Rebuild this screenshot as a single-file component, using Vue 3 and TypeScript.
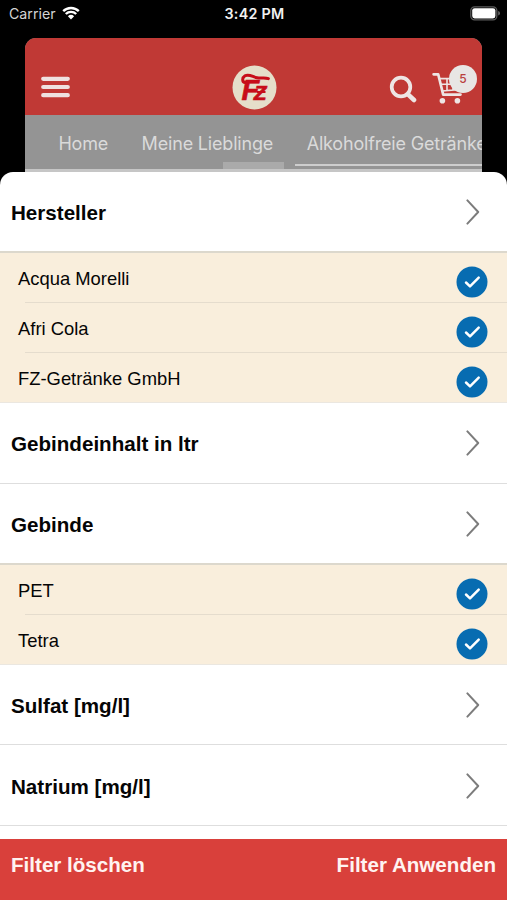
<script setup lang="ts">
import { ref } from 'vue'

interface Option {
  label: string
  checked: boolean
}
interface Section {
  title: string
  options: Option[]
}

const tabs: string[] = ['Home', 'Meine Lieblinge', 'Alkoholfreie Getränke']
const cartCount = ref(5)

const sections = ref<Section[]>([
  {
    title: 'Hersteller',
    options: [
      { label: 'Acqua Morelli', checked: true },
      { label: 'Afri Cola', checked: true },
      { label: 'FZ-Getränke GmbH', checked: true },
    ],
  },
  { title: 'Gebindeinhalt in ltr', options: [] },
  {
    title: 'Gebinde',
    options: [
      { label: 'PET', checked: true },
      { label: 'Tetra', checked: true },
    ],
  },
  { title: 'Sulfat [mg/l]', options: [] },
  { title: 'Natrium [mg/l]', options: [] },
])

function clearFilters(): void {
  for (const s of sections.value) for (const o of s.options) o.checked = false
}
</script>

<template>
  <div class="screen">
    <header class="status">
      <div class="carrier">
        <span>Carrier</span>
        <svg class="wifi" viewBox="0 0 18 14" width="18" height="14">
          <path d="M1.2 5.1 A11.2 11.2 0 0 1 16.8 5.1" />
          <path d="M3.8 8 A7.4 7.4 0 0 1 14.2 8" />
          <path class="dot" d="M9 13.4 L5.9 10.3 A4.5 4.5 0 0 1 12.1 10.3 Z" />
        </svg>
      </div>
      <div class="time">3:42 PM</div>
      <svg class="battery" viewBox="0 0 31 15" width="31" height="15">
        <rect class="shell" x="0.8" y="0.8" width="26" height="13" rx="3.8" />
        <rect class="charge" x="2.2" y="2.2" width="23.2" height="10.2" rx="2.4" />
        <path class="cap" d="M28.2 5 Q30 5.6 30 7.3 Q30 9 28.2 9.6 Z" />
      </svg>
    </header>

    <div class="backdrop">
      <div class="appbar">
        <svg class="menu" viewBox="0 0 29 22" width="29" height="22">
          <path d="M2.2 2.8 H26.8 M2.2 11 H26.8 M2.2 19.2 H26.8" />
        </svg>
        <svg class="logo" viewBox="0 0 45 45" width="45" height="45">
          <circle cx="22.5" cy="22.5" r="22" />
          <path class="swash" d="M13.4 17.4 C10.2 17.6 9.6 13 13 10.8 C17 8.6 20.5 11.8 25 12.8 C29 13.6 33 12.4 36.4 13.6" />
          <text x="9.4" y="34.6"><tspan class="big">F</tspan><tspan class="small" dx="-5.4">Z</tspan></text>
          <path class="bar" d="M25 27 H33.5" />
        </svg>
        <div class="actions">
          <svg class="search" viewBox="0 0 28 28" width="28" height="28">
            <circle cx="12" cy="12" r="9.3" />
            <path d="M19 19.4 L25 25" />
          </svg>
          <div class="cart">
            <svg viewBox="0 0 34 32" width="34" height="32">
              <path class="frame" d="M1.6 2.3 H6.2 L11.2 22.6 H28.5" />
              <path class="grid" d="M7.5 6.6 H30 L28 17.4 L10.2 19 M8.6 12.2 H29 M15 7 V18.5 M21 7 V18" />
              <circle cx="10.4" cy="28.7" r="2.8" />
              <circle cx="25.4" cy="28.7" r="2.8" />
            </svg>
            <span class="badge">{{ cartCount }}</span>
          </div>
        </div>
      </div>
      <nav class="tabs">
        <span v-for="tab in tabs" :key="tab" class="tab">{{ tab }}</span>
        <i class="indicator"></i>
        <i class="underline"></i>
      </nav>
    </div>

    <main class="sheet">
      <section v-for="section in sections" :key="section.title">
        <div class="heading" :class="{ open: section.options.length > 0 }">
          <h2>{{ section.title }}</h2>
          <svg class="chevron" viewBox="0 0 14 26" width="14" height="26">
            <path d="M1.4 1.4 L12.2 13 L1.4 24.6" />
          </svg>
        </div>
        <ul v-if="section.options.length" class="options">
          <li v-for="option in section.options" :key="option.label" @click="option.checked = !option.checked">
            <span>{{ option.label }}</span>
            <svg v-if="option.checked" class="check" viewBox="0 0 32 32" width="32" height="32">
              <circle cx="16" cy="16" r="15.5" />
              <path d="M10 16.5 L14 20.4 L22.7 11.6" />
            </svg>
          </li>
        </ul>
      </section>
    </main>

    <footer class="footer">
      <button type="button" @click="clearFilters">Filter löschen</button>
      <button type="button">Filter Anwenden</button>
    </footer>
  </div>
</template>

<style>
body {
  margin: 0;
  background: #000;
}
</style>

<style scoped>
.screen {
  width: 507px;
  height: 900px;
  display: flex;
  flex-direction: column;
  overflow: hidden;
  background: #000;
  font-family: 'Liberation Sans', Arial, sans-serif;
  color: #050505;
}
svg {
  display: block;
  flex: none;
}
.status {
  flex: none;
  box-sizing: border-box;
  height: 38px;
  padding: 0 7px 11px 9px;
  display: grid;
  grid-template-columns: 1fr auto 1fr;
  align-items: center;
  color: #f1f1f1;
  font-family: Inter, sans-serif;
}
.carrier {
  display: flex;
  align-items: center;
  gap: 6px;
  font-size: 14.2px;
  color: #d4d4d4;
}
.wifi {
  margin-top: -2px;
}
.wifi path {
  fill: none;
  stroke: #fff;
  stroke-width: 2.4;
}
.wifi .dot {
  fill: #fff;
  stroke: none;
}
.time {
  font-size: 14.3px;
  font-weight: 600;
  letter-spacing: 0.3px;
}
.battery {
  justify-self: end;
  margin-top: -1px;
  margin-right: -1px;
}
.shell {
  fill: none;
  stroke: #5c5c5c;
  stroke-width: 1.3;
}
.charge {
  fill: #fff;
}
.cap {
  fill: #666;
}
.backdrop {
  flex: none;
  height: 134px;
  margin: 0 24.6px 0 25.4px;
  border-radius: 11px 11px 0 0;
  overflow: hidden;
  background: #949494;
}
.appbar {
  box-sizing: border-box;
  height: 77px;
  padding: 20px 5.5px 0 16px;
  background: #c03935;
  display: grid;
  grid-template-columns: 1fr auto 1fr;
  align-items: center;
}
.menu path {
  fill: none;
  stroke: #efe1e0;
  stroke-width: 4.2;
  stroke-linecap: round;
}
.logo {
  margin-left: -10px;
  margin-top: 1px;
}
.logo circle {
  fill: #e5dfca;
}
.logo text {
  fill: #c70d19;
  stroke: #c70d19;
  stroke-width: 0.6;
  font-family: 'Liberation Sans', Arial, sans-serif;
  font-style: italic;
  font-weight: 700;
}
.logo .big {
  font-size: 29px;
}
.logo .small {
  font-size: 21px;
}
.logo .swash {
  fill: none;
  stroke: #c70d19;
  stroke-width: 3;
  stroke-linecap: round;
}
.logo .bar {
  stroke: #c70d19;
  stroke-width: 1.8;
}
.actions {
  justify-self: end;
  display: flex;
  align-items: center;
  gap: 14.5px;
}
.search {
  margin-top: 5px;
}
.search circle,
.search path {
  fill: none;
  stroke: #eee5e4;
  stroke-width: 3.7;
  stroke-linecap: round;
}
.search path {
  stroke-width: 4.6;
}
.cart {
  position: relative;
  width: 45px;
  margin-top: 2px;
}
.cart circle {
  fill: #eee5e4;
}
.frame {
  fill: none;
  stroke: #eee5e4;
  stroke-width: 2.7;
  stroke-linecap: round;
  stroke-linejoin: round;
}
.grid {
  fill: none;
  stroke: #eee5e4;
  stroke-width: 1.6;
}
.badge {
  position: absolute;
  top: -7px;
  right: 0;
  width: 28px;
  height: 28px;
  border-radius: 50%;
  background: #e8e6e4;
  color: #b9413d;
  font: 500 12px/28px Inter, sans-serif;
  text-align: center;
}
.tabs {
  position: relative;
  height: 57px;
  box-sizing: border-box;
  padding-left: 33px;
  display: flex;
  gap: 33.5px;
  border-bottom: 3px solid #c6c6c6;
  font-family: Inter, sans-serif;
  font-size: 18px;
  line-height: 57px;
  letter-spacing: -0.18px;
  color: #dadada;
  white-space: nowrap;
}
.indicator {
  position: absolute;
  left: 198px;
  bottom: 0;
  width: 61px;
  height: 7px;
  background: #aaa;
}
.underline {
  position: absolute;
  left: 270px;
  right: 0;
  bottom: 3px;
  height: 2px;
  background: #cdcdcd;
}
.sheet {
  flex: 1;
  min-height: 0;
  overflow: hidden;
  border-radius: 13px 13px 0 0;
  background: #fff;
}
.heading {
  box-sizing: border-box;
  height: 80.75px;
  padding: 1px 27px 0 11px;
  display: flex;
  align-items: center;
  justify-content: space-between;
  border-bottom: 1.5px solid #dedede;
}
.heading.open {
  border-bottom: 2px solid #dcd8cd;
}
h2 {
  margin: 2px 0 0;
  font-size: 20.6px;
  font-weight: 700;
  line-height: 24px;
}
.chevron path {
  fill: none;
  stroke: #7c7c7c;
  stroke-width: 2;
  stroke-linecap: round;
  stroke-linejoin: round;
}
.options {
  list-style: none;
  margin: 0;
  padding: 0;
  background: #f9eedc;
}
li {
  box-sizing: border-box;
  height: 50.1px;
  padding: 0 19px 0 18px;
  display: flex;
  align-items: center;
  justify-content: space-between;
  font-size: 18.4px;
  line-height: 22px;
  background: linear-gradient(#e5dccd, #e5dccd) 25px 100% / 100% 1px no-repeat;
}
li:last-child {
  background: linear-gradient(#ebe7e0, #ebe7e0) 0 100% / 100% 1px no-repeat;
}
li span {
  margin-top: 3px;
}
.check {
  margin-top: 9px;
}
.check circle {
  fill: #076cb1;
}
.check path {
  fill: none;
  stroke: #fff;
  stroke-width: 2.5;
  stroke-linecap: round;
  stroke-linejoin: round;
}
.footer {
  flex: none;
  box-sizing: border-box;
  height: 61px;
  padding: 14px 11px 0;
  display: flex;
  align-items: flex-start;
  justify-content: space-between;
  background: #d9403b;
}
button {
  border: 0;
  padding: 0;
  background: none;
  color: #fff3f1;
  font: 700 20.6px/24px 'Liberation Sans', Arial, sans-serif;
}
</style>
